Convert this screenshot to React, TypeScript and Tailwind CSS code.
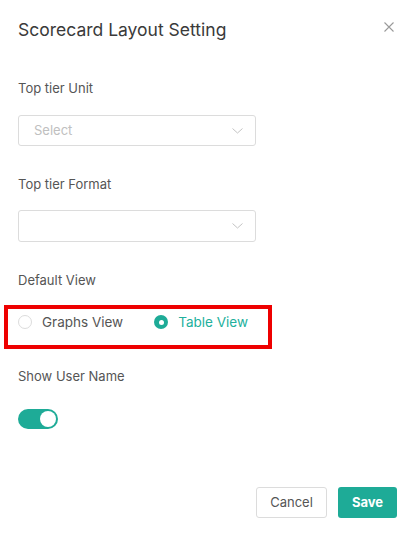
import React from "react";

function Chevron() {
  return (
    <svg width="11" height="6" viewBox="0 0 11 6" fill="none">
      <path d="M0.5 0.5L5.5 5L10.5 0.5" stroke="#c4c4c4" strokeWidth="1" />
    </svg>
  );
}

export default function App() {
  return (
    <div
      className="relative w-[417px] h-[538px] bg-white"
      style={{ fontFamily: "Inter, 'Noto Sans', sans-serif" }}
    >
      <div className="flex flex-col px-[18px] pt-[18px]">
        <div className="flex items-center justify-between h-[24px]">
          <div className="text-[17.5px] leading-[24px] text-[#3a3a3a]">Scorecard Layout Setting</div>
          <svg width="10" height="10" viewBox="0 0 10 10" className="mr-[5px] -mt-[6px]">
            <path d="M0.5 0.5L9.5 9.5M9.5 0.5L0.5 9.5" stroke="#9a9a9a" strokeWidth="1.1" />
          </svg>
        </div>

        <div className="mt-[36px] text-[13px] leading-[20px] text-[#555555]">Top tier Unit</div>
        <div className="mt-[17px] w-[238px] h-[31px] border border-[#dcdcdc] rounded-[3px] flex items-center justify-between pl-[15px] pr-[12px]">
          <span className="text-[13px] text-[#c0c0c0]">Select</span>
          <Chevron />
        </div>

        <div className="mt-[28px] text-[13px] leading-[20px] text-[#555555]">Top tier Format</div>
        <div className="mt-[16px] w-[238px] h-[32px] border border-[#dcdcdc] rounded-[3px] flex items-center justify-end pr-[12px]">
          <Chevron />
        </div>

        <div className="mt-[28px] text-[13px] leading-[20px] text-[#555555]">Default View</div>
        <div className="mt-[22px] h-[20px] flex items-center">
          <span className="w-[14px] h-[14px] rounded-full border border-[#dcdcdc] bg-white" />
          <span className="ml-[10px] text-[13.5px] text-[#555555]">Graphs View</span>
          <span className="ml-[31px] w-[14px] h-[14px] rounded-full bg-[#1eab97] flex items-center justify-center">
            <span className="w-[5px] h-[5px] rounded-full bg-white" />
          </span>
          <span className="ml-[10px] text-[13.5px] text-[#22b09c]">Table View</span>
        </div>

        <div className="mt-[34px] text-[13px] leading-[20px] text-[#555555]">Show User Name</div>
        <div className="mt-[23px] w-[40px] h-[20px] rounded-full bg-[#1eab97] flex items-center justify-end pr-[2px]">
          <span className="w-[16px] h-[16px] rounded-full bg-white" />
        </div>

        <div className="mt-[58px] flex justify-end gap-[11px] pr-[2px]">
          <button className="w-[71px] h-[31px] border border-[#dcdcdc] rounded-[3px] bg-white text-[13px] text-[#555555]">
            Cancel
          </button>
          <button className="w-[59px] h-[31px] rounded-[3px] bg-[#1eab97] text-[13px] font-bold text-white">
            Save
          </button>
        </div>
      </div>

      <div className="absolute left-[4px] top-[305px] w-[268px] h-[44px] border-[4px] border-[#ee0000] pointer-events-none" />
    </div>
  );
}
